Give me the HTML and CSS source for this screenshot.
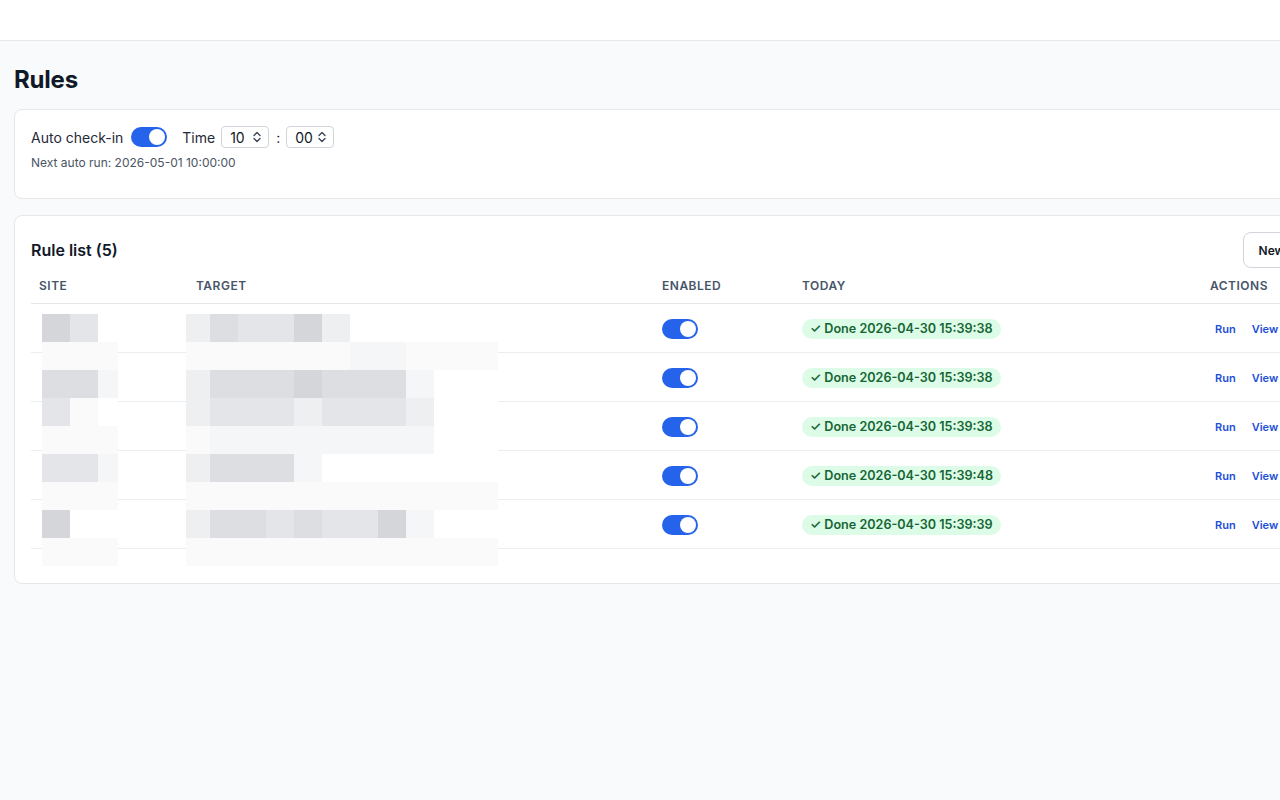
FILE: index.html
```html
<!DOCTYPE html>
<html lang="en">
<head>
    <meta charset="UTF-8">
    <meta name="viewport" content="width=device-width, initial-scale=1.0">
    <title>Rules</title>
    <link rel="stylesheet" href="styles.css">
</head>
<body>
    <!-- Top bar -->
    <header class="topbar"></header>

    <main class="page">
        <h1 class="page-title">Rules</h1>

        <!-- Schedule card -->
        <section class="card schedule">
            <div class="schedule-row">
                <span class="label">Auto check-in</span>
                <span class="switch"><span class="knob"></span></span>
                <span class="label time-label">Time</span>
                <span class="select">10
                    <svg width="10" height="12" viewBox="0 0 10 12"><path d="M2 4.5L5 1.5L8 4.5M2 7.5L5 10.5L8 7.5" fill="none" stroke="#374151" stroke-width="1.3" stroke-linecap="round" stroke-linejoin="round"/></svg>
                </span>
                <span class="colon">:</span>
                <span class="select">00
                    <svg width="10" height="12" viewBox="0 0 10 12"><path d="M2 4.5L5 1.5L8 4.5M2 7.5L5 10.5L8 7.5" fill="none" stroke="#374151" stroke-width="1.3" stroke-linecap="round" stroke-linejoin="round"/></svg>
                </span>
            </div>
            <p class="next-run">Next auto run: 2026-05-01 10:00:00</p>
        </section>

        <!-- Rule list -->
        <section class="card rules">
            <div class="card-head">
                <h2>Rule list (5)</h2>
                <button class="btn">New rule</button>
            </div>

            <div class="table-wrap">
                <table class="rule-table">
                    <colgroup>
                        <col class="col-site">
                        <col class="col-target">
                        <col class="col-enabled">
                        <col class="col-today">
                        <col>
                    </colgroup>
                    <thead>
                        <tr><th>Site</th><th>Target</th><th>Enabled</th><th>Today</th><th>Actions</th></tr>
                    </thead>
                    <tbody>
                        <tr>
                            <td></td><td></td>
                            <td><span class="switch"><span class="knob"></span></span></td>
                            <td><span class="badge">&#10003; Done 2026-04-30 15:39:38</span></td>
                            <td><a class="act">Run</a><a class="act">View</a></td>
                        </tr>
                        <tr>
                            <td></td><td></td>
                            <td><span class="switch"><span class="knob"></span></span></td>
                            <td><span class="badge">&#10003; Done 2026-04-30 15:39:38</span></td>
                            <td><a class="act">Run</a><a class="act">View</a></td>
                        </tr>
                        <tr>
                            <td></td><td></td>
                            <td><span class="switch"><span class="knob"></span></span></td>
                            <td><span class="badge">&#10003; Done 2026-04-30 15:39:38</span></td>
                            <td><a class="act">Run</a><a class="act">View</a></td>
                        </tr>
                        <tr>
                            <td></td><td></td>
                            <td><span class="switch"><span class="knob"></span></span></td>
                            <td><span class="badge">&#10003; Done 2026-04-30 15:39:48</span></td>
                            <td><a class="act">Run</a><a class="act">View</a></td>
                        </tr>
                        <tr>
                            <td></td><td></td>
                            <td><span class="switch"><span class="knob"></span></span></td>
                            <td><span class="badge">&#10003; Done 2026-04-30 15:39:39</span></td>
                            <td><a class="act">Run</a><a class="act">View</a></td>
                        </tr>
                    </tbody>
                </table>

                <!-- pixelated cover over the site column -->
                <div class="mosaic mosaic-site">
                    <i class="s1"></i><i class="s3"></i><i></i>
                    <i class="s6"></i><i class="s6"></i><i class="s6"></i>
                    <i class="s2"></i><i class="s2"></i><i class="s5"></i>
                    <i class="s3"></i><i class="s6"></i><i></i>
                    <i class="s6"></i><i class="s6"></i><i class="s6"></i>
                    <i class="s3"></i><i class="s3"></i><i class="s5"></i>
                    <i class="s6"></i><i class="s6"></i><i class="s6"></i>
                    <i class="s1"></i><i></i><i></i>
                    <i class="s6"></i><i class="s6"></i><i class="s6"></i>
                </div>

                <!-- pixelated cover over the target column -->
                <div class="mosaic mosaic-target">
                    <i class="s4"></i><i class="s2"></i><i class="s3"></i><i class="s3"></i><i class="s1"></i><i class="s4"></i><i></i><i></i><i></i><i></i><i></i><i></i>
                    <i class="s6"></i><i class="s6"></i><i class="s6"></i><i class="s6"></i><i class="s6"></i><i class="s6"></i><i class="s5"></i><i class="s5"></i><i class="s6"></i><i class="s6"></i><i class="s6"></i><i class="s6"></i>
                    <i class="s4"></i><i class="s2"></i><i class="s2"></i><i class="s2"></i><i class="s1"></i><i class="s2"></i><i class="s2"></i><i class="s2"></i><i class="s5"></i><i></i><i></i><i></i>
                    <i class="s4"></i><i class="s3"></i><i class="s3"></i><i class="s3"></i><i class="s4"></i><i class="s3"></i><i class="s3"></i><i class="s3"></i><i class="s4"></i><i></i><i></i><i></i>
                    <i class="s6"></i><i class="s5"></i><i class="s5"></i><i class="s5"></i><i class="s5"></i><i class="s5"></i><i class="s5"></i><i class="s5"></i><i class="s5"></i><i></i><i></i><i></i>
                    <i class="s4"></i><i class="s2"></i><i class="s2"></i><i class="s2"></i><i class="s5"></i><i></i><i></i><i></i><i></i><i></i><i></i><i></i>
                    <i class="s6"></i><i class="s6"></i><i class="s6"></i><i class="s6"></i><i class="s6"></i><i class="s6"></i><i class="s6"></i><i class="s6"></i><i class="s6"></i><i class="s6"></i><i class="s6"></i><i class="s6"></i>
                    <i class="s4"></i><i class="s2"></i><i class="s2"></i><i class="s3"></i><i class="s2"></i><i class="s3"></i><i class="s3"></i><i class="s1"></i><i class="s5"></i><i></i><i></i><i></i>
                    <i class="s6"></i><i class="s6"></i><i class="s6"></i><i class="s6"></i><i class="s6"></i><i class="s6"></i><i class="s6"></i><i class="s6"></i><i class="s6"></i><i class="s6"></i><i class="s6"></i><i class="s6"></i>
                </div>
            </div>
        </section>
    </main>
</body>
</html>
```

FILE: styles.css
```css
html, body {
    overflow: hidden;
}

body {
    margin: 0;
    background-color: #f8fafc;
    font-family: Inter, "Noto Sans", sans-serif;
    color: #111827;
}

.topbar {
    height: 40px;
    background-color: #fff;
    border-bottom: 1px solid #e5e7eb;
}

.page {
    width: 1328px;
    padding: 23px 14px 0;
}

.page-title {
    margin: 0 0 13px;
    font-size: 24px;
    line-height: 32px;
    font-weight: 700;
    letter-spacing: -0.2px;
}

.card {
    background-color: #fff;
    border: 1px solid #e5e7eb;
    border-radius: 8px;
}

/* schedule */
.schedule {
    padding: 16px 16px 27px;
    margin-bottom: 16px;
}

.schedule-row {
    display: flex;
    align-items: center;
    height: 22px;
}

.label {
    font-size: 14px;
    color: #1f2937;
}

.schedule-row .switch {
    margin-left: 8px;
}

.time-label {
    margin-left: 15px;
    margin-right: 6px;
}

.select {
    display: inline-flex;
    align-items: center;
    justify-content: space-between;
    box-sizing: border-box;
    width: 48px;
    height: 22px;
    padding: 0 6px 0 8px;
    border: 1px solid #d1d5db;
    border-radius: 4px;
    font-size: 14px;
    color: #111827;
}

.colon {
    margin: 0 6px 0 7px;
    font-size: 14px;
}

.next-run {
    margin: 7px 0 0;
    font-size: 12px;
    line-height: 16px;
    color: #4b5563;
}

.switch {
    display: inline-block;
    position: relative;
    width: 36px;
    height: 20px;
    border-radius: 10px;
    background-color: #2563eb;
    vertical-align: middle;
}

.switch .knob {
    position: absolute;
    top: 2px;
    right: 2px;
    width: 16px;
    height: 16px;
    border-radius: 50%;
    background-color: #fff;
}

/* rule list */
.rules {
    padding: 16px 16px 16px;
}

.card-head {
    display: flex;
    justify-content: space-between;
    align-items: center;
    height: 36px;
}

.card-head h2 {
    margin: 0;
    font-size: 16px;
    font-weight: 600;
}

.btn {
    height: 36px;
    padding: 0 14px 0 15px;
    background-color: #fff;
    border: 1px solid #d1d5db;
    border-radius: 8px;
    font-family: inherit;
    font-size: 12px;
    font-weight: 600;
    color: #111827;
}

.table-wrap {
    position: relative;
    margin-bottom: 18px;
}

.rule-table {
    width: 100%;
    border-collapse: collapse;
    table-layout: fixed;
}

.col-site { width: 157px; }
.col-target { width: 466px; }
.col-enabled { width: 140px; }
.col-today { width: 408px; }

.rule-table th {
    height: 35px;
    padding: 0 8px;
    text-align: left;
    font-size: 12px;
    line-height: 16px;
    font-weight: 600;
    text-transform: uppercase;
    letter-spacing: 0.5px;
    color: #475569;
    border-bottom: 1px solid #e5e7eb;
}

.rule-table td {
    height: 48px;
    padding: 0 8px;
    border-bottom: 1px solid #eceef1;
    vertical-align: middle;
    line-height: 20px;
}

.badge {
    display: inline-block;
    height: 20px;
    padding: 0 8px;
    border-radius: 10px;
    background-color: #dcfce7;
    color: #166534;
    font-size: 12.6px;
    font-weight: 600;
    line-height: 20px;
    white-space: nowrap;
}

.act {
    padding: 4px 5px;
    margin-right: 6px;
    font-size: 11px;
    font-weight: 600;
    color: #1d4ed8;
    cursor: pointer;
}

/* pixelated cover */
.mosaic {
    position: absolute;
    top: 46px;
    display: grid;
    grid-auto-rows: 28px;
}

.mosaic i {
    background-color: #fff;
}

.mosaic-site {
    left: 11px;
    grid-template-columns: 28px 28px 20px;
}

.mosaic-target {
    left: 155px;
    grid-template-columns: 24px repeat(10, 28px) 8px;
}

.mosaic i.s1 { background-color: #d5d6da; }
.mosaic i.s2 { background-color: #dddee2; }
.mosaic i.s3 { background-color: #e4e5e8; }
.mosaic i.s4 { background-color: #eeeff1; }
.mosaic i.s5 { background-color: #f5f6f7; }
.mosaic i.s6 { background-color: #fafafb; }
```
